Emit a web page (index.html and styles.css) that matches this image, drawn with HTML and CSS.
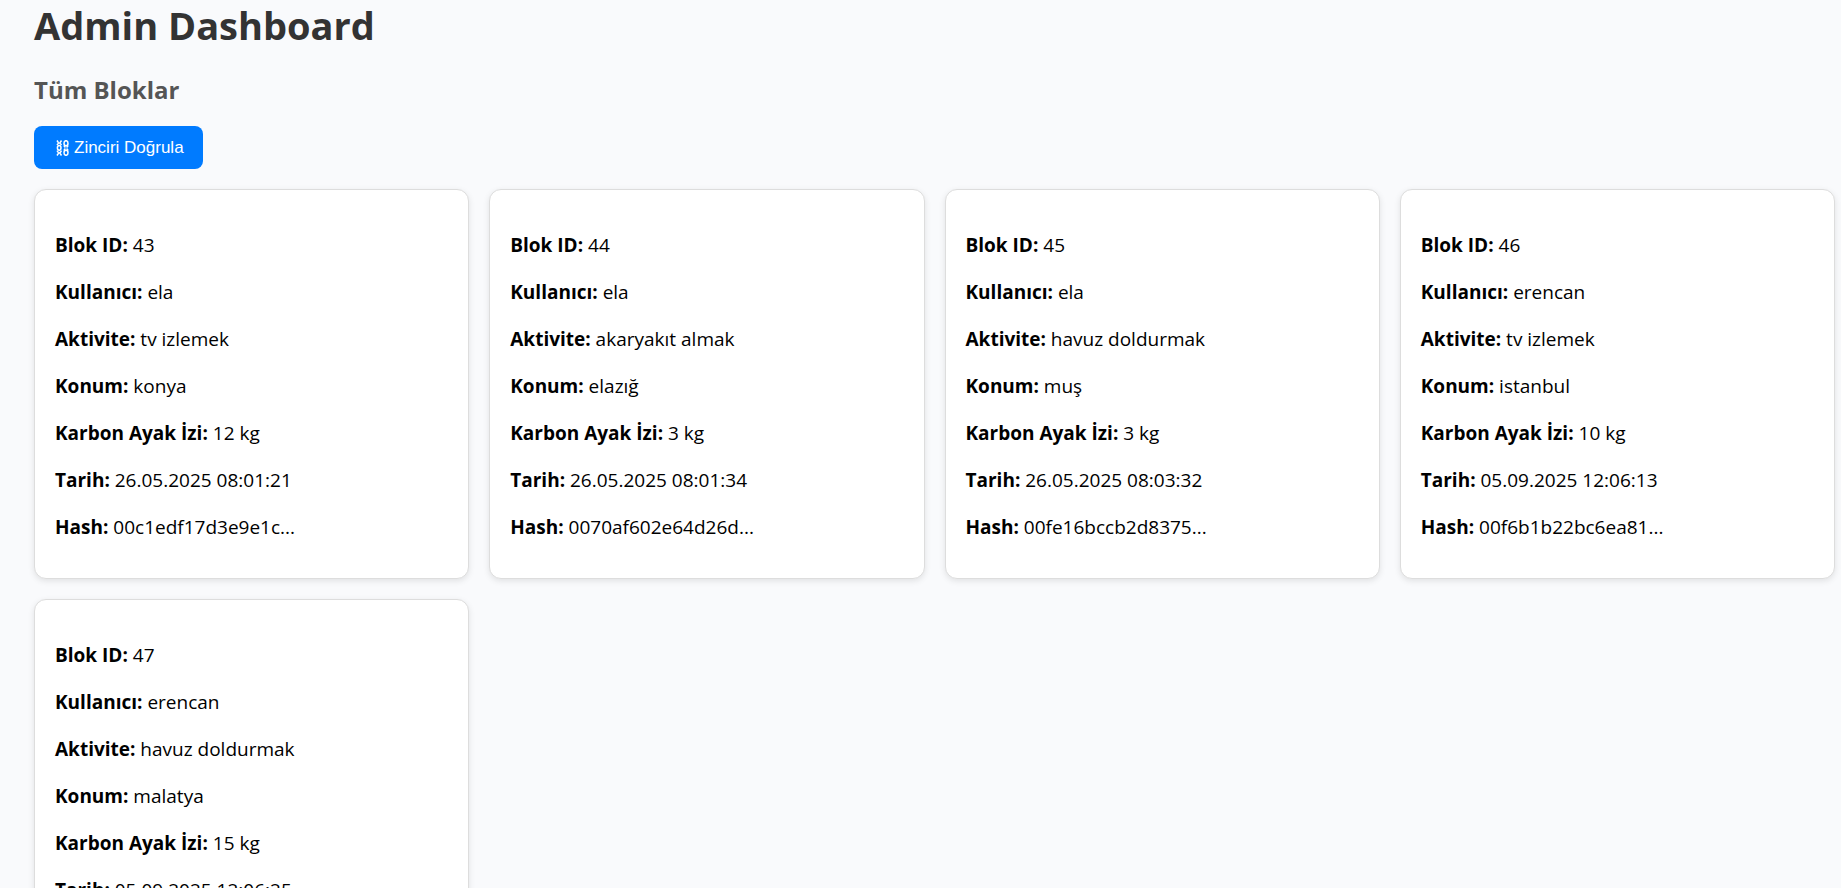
FILE: index.html
```html
<!DOCTYPE html>
<html lang="tr">
<head>
<meta charset="utf-8">
<title>Admin Dashboard</title>
<link rel="stylesheet" href="styles.css">
</head>
<body>
<main class="dashboard">
<h1 class="title">Admin Dashboard</h1>
<h2 class="subtitle">Tüm Bloklar</h2>
<button class="verify" type="button"><svg class="chain" viewBox="0 0 13 16" fill="none" stroke="currentColor" stroke-width="1.5" aria-hidden="true"><path d="M1 .5L2.2 2.4Q3.2 3.6 4.3 2.4L5.5 .5M1 5L2.3 3.4M5.5 5L4.2 3.4M1 10.6L2.2 12.4Q3.2 13.5 4.3 12.4L5.5 10.6M1 15.5L2.4 13.4M5.5 15.5L4.1 13.4"/><ellipse cx="3.2" cy="7.8" rx="1.8" ry="2.4"/><ellipse cx="10" cy="3.2" rx="2" ry="2.5"/><ellipse cx="10" cy="12.8" rx="2" ry="2.5"/><path d="M7.8 5.6l1.6 1.8M12.2 5.6l-1.6 1.8M7.8 10.4l1.6-1.8M12.2 10.4l-1.6-1.8"/></svg>Zinciri Doğrula</button>
<section class="blocks">
<article class="card"><p><strong>Blok ID:</strong> 43</p><p><strong>Kullanıcı:</strong> ela</p><p><strong>Aktivite:</strong> tv izlemek</p><p><strong>Konum:</strong> konya</p><p><strong>Karbon Ayak İzi:</strong> 12 kg</p><p><strong>Tarih:</strong> 26.05.2025 08:01:21</p><p><strong>Hash:</strong> 00c1edf17d3e9e1c...</p></article>
<article class="card"><p><strong>Blok ID:</strong> 44</p><p><strong>Kullanıcı:</strong> ela</p><p><strong>Aktivite:</strong> akaryakıt almak</p><p><strong>Konum:</strong> elazığ</p><p><strong>Karbon Ayak İzi:</strong> 3 kg</p><p><strong>Tarih:</strong> 26.05.2025 08:01:34</p><p><strong>Hash:</strong> 0070af602e64d26d...</p></article>
<article class="card"><p><strong>Blok ID:</strong> 45</p><p><strong>Kullanıcı:</strong> ela</p><p><strong>Aktivite:</strong> havuz doldurmak</p><p><strong>Konum:</strong> muş</p><p><strong>Karbon Ayak İzi:</strong> 3 kg</p><p><strong>Tarih:</strong> 26.05.2025 08:03:32</p><p><strong>Hash:</strong> 00fe16bccb2d8375...</p></article>
<article class="card"><p><strong>Blok ID:</strong> 46</p><p><strong>Kullanıcı:</strong> erencan</p><p><strong>Aktivite:</strong> tv izlemek</p><p><strong>Konum:</strong> istanbul</p><p><strong>Karbon Ayak İzi:</strong> 10 kg</p><p><strong>Tarih:</strong> 05.09.2025 12:06:13</p><p><strong>Hash:</strong> 00f6b1b22bc6ea81...</p></article>
<article class="card"><p><strong>Blok ID:</strong> 47</p><p><strong>Kullanıcı:</strong> erencan</p><p><strong>Aktivite:</strong> havuz doldurmak</p><p><strong>Konum:</strong> malatya</p><p><strong>Karbon Ayak İzi:</strong> 15 kg</p><p><strong>Tarih:</strong> 05.09.2025 12:06:25</p></article>
</section>
</main>
</body>
</html>
```

FILE: styles.css
```css
body { margin: 0; background: #f9fafc; color: #000; font: 19px/27px "Open Sans", "Noto Sans", sans-serif; overflow: hidden; }
.dashboard { padding: 0 6px 0 34px; }
.title { margin: 0; font-size: 38px; line-height: 50px; color: #333; }
.subtitle { margin: 23px 0 19px; font-size: 24px; line-height: 34px; color: #555; }
.verify { display: flex; align-items: center; gap: 5px; height: 43px; padding: 0 19px 0 22px; border: 0; border-radius: 8px; background: #007bff; color: #fff; font: 17px "Liberation Sans", sans-serif; cursor: pointer; }
.chain { width: 13px; height: 16px; }
.blocks { display: grid; grid-template-columns: repeat(4, 1fr); gap: 20px; margin-top: 20px; }
.card { padding: 22px 20px 17px; border: 1px solid #ddd; border-radius: 12px; background: #fff; box-shadow: 0 2px 6px rgba(0, 0, 0, .1); }
.card p { margin: 20px 0; }
```
